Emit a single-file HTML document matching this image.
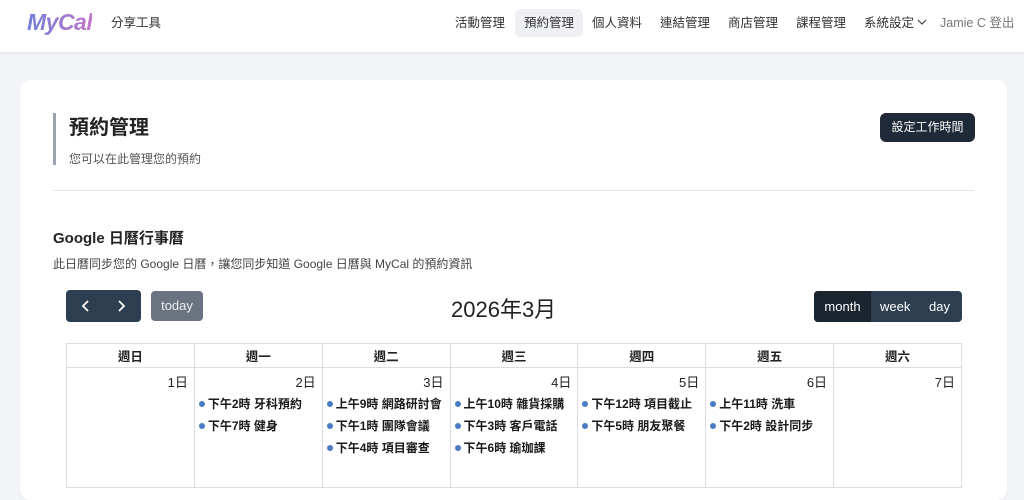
<!DOCTYPE html>
<html><head><meta charset="utf-8"><style>
*{box-sizing:border-box;margin:0;padding:0}
body{width:1024px;height:479px;overflow:hidden;background:#f2f4f8;font-family:"Liberation Sans","Noto Sans CJK TC",sans-serif;color:#222;position:relative}
.nav{position:absolute;left:0;top:0;width:1024px;height:52px;background:#fff;box-shadow:0 1px 3px rgba(0,0,0,.08)}
.logo{position:absolute;left:27px;top:9px;font:italic bold 23px "Liberation Sans",sans-serif;letter-spacing:-0.5px;background:linear-gradient(90deg,#6f7fd8,#c377c8);-webkit-background-clip:text;color:transparent}
.a{position:absolute;top:15px;font-size:12.5px;color:#333;line-height:17px}
.act{background:#eef0f4;border-radius:5px;padding:0 9px;height:28px;line-height:28px;top:9px}
.card{position:absolute;left:20px;top:80px;width:987px;height:420px;background:#fff;border-radius:10px;box-shadow:0 1px 3px rgba(0,0,0,.05)}
.bar{position:absolute;left:53px;top:113px;width:3px;height:52px;background:#9ca3af}
.btn{position:absolute;left:880px;top:113px;width:95px;height:29px;background:#1f2937;color:#fff;border-radius:6px;font-size:12px;text-align:center;line-height:29px}
table{position:absolute;left:66px;top:343px;border-collapse:collapse;width:896px;table-layout:fixed}
td,th{border:1px solid #ddd;font-size:12.5px}
th{height:24px;font-weight:bold}
td{height:120px;vertical-align:top;text-align:right;padding:4px 6px;font-size:13px}
.e{text-align:left;font-size:12px;margin-top:5px;white-space:nowrap;margin-left:-2px;font-weight:bold;color:#1a1a1a}
.e:before{content:"";display:inline-block;width:6px;height:6px;border-radius:50%;background:#4a7cc6;margin-right:3px;vertical-align:1px}
.e:first-of-type{margin-top:4px}
</style></head><body>
<div class="nav">
<div class="logo">MyCal</div>
<div class="a" style="left:111px">分享工具</div>
<div class="a" style="left:455px">活動管理</div>
<div class="a act" style="left:515px">預約管理</div>
<div class="a" style="left:592px">個人資料</div>
<div class="a" style="left:660px">連結管理</div>
<div class="a" style="left:728px">商店管理</div>
<div class="a" style="left:796px">課程管理</div>
<div class="a" style="left:864px">系統設定 <svg width="10" height="8" viewBox="0 0 10 8" style="vertical-align:1px"><path d="M1 2l4 4 4-4" fill="none" stroke="#444" stroke-width="1.2"/></svg></div>
<div class="a" style="left:940px;color:#777">Jamie C 登出</div>
</div>
<div class="card"></div>
<div class="bar"></div>
<div style="position:absolute;left:69px;top:111px;font-size:20px;font-weight:bold;color:#222">預約管理</div>
<div style="position:absolute;left:69px;top:150px;font-size:12px;color:#555">您可以在此管理您的預約</div>
<div class="btn">設定工作時間</div>
<div style="position:absolute;left:53px;top:190px;width:921px;height:1px;background:#e5e7eb"></div>
<div style="position:absolute;left:53px;top:227px;font-size:15px;font-weight:bold">Google 日曆行事曆</div>
<div style="position:absolute;left:53px;top:255px;font-size:12px;color:#444">此日曆同步您的 Google 日曆，讓您同步知道 Google 日曆與 MyCal 的預約資訊</div>
<div style="position:absolute;left:66px;top:290px;width:75px;height:32px;background:#2c3e50;border-radius:4px">
<svg width="75" height="32" style="position:absolute;left:0;top:0"><path d="M22 11l-5 5 5 5M53 11l5 5-5 5" fill="none" stroke="#fff" stroke-width="1.8"/></svg></div>
<div style="position:absolute;left:151px;top:291px;width:52px;height:30px;background:#6b7280;border-radius:4px;color:#eee;font-size:13px;text-align:center;line-height:30px">today</div>
<div style="position:absolute;left:451px;top:292px;font-size:22px">2026年3月</div>
<div style="position:absolute;left:814px;top:291px;width:148px;height:31px;background:#2c3e50;border-radius:4px;color:#fff;font-size:13px;line-height:31px">
<span style="position:absolute;left:0;width:57px;height:31px;background:#1a252f;border-radius:4px 0 0 4px;text-align:center">month</span>
<span style="position:absolute;left:66px">week</span><span style="position:absolute;left:115px">day</span></div>
<table><tr><th>週日</th><th>週一</th><th>週二</th><th>週三</th><th>週四</th><th>週五</th><th>週六</th></tr>
<tr><td>1日</td>
<td>2日<div class="e">下午2時 牙科預約</div><div class="e">下午7時 健身</div></td>
<td>3日<div class="e">上午9時 網路研討會</div><div class="e">下午1時 團隊會議</div><div class="e">下午4時 項目審查</div></td>
<td>4日<div class="e">上午10時 雜貨採購</div><div class="e">下午3時 客戶電話</div><div class="e">下午6時 瑜珈課</div></td>
<td>5日<div class="e">下午12時 項目截止</div><div class="e">下午5時 朋友聚餐</div></td>
<td>6日<div class="e">上午11時 洗車</div><div class="e">下午2時 設計同步</div></td>
<td>7日</td></tr></table>
</body></html>
